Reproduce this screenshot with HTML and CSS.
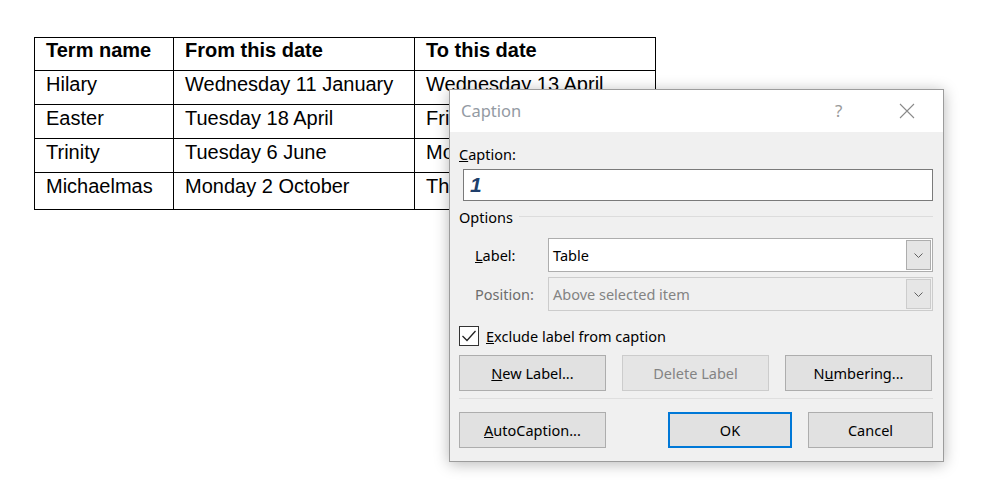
FILE: index.html
```html
<!DOCTYPE html>
<html>
<head>
<meta charset="utf-8">
<link rel="stylesheet" href="styles.css">
</head>
<body>
<table class="terms">
  <tr class="r-head"><th class="c1">Term name</th><th class="c2">From this date</th><th class="c3">To this date</th></tr>
  <tr class="r1"><td>Hilary</td><td>Wednesday 11 January</td><td>Wednesday 13 April</td></tr>
  <tr class="r2"><td>Easter</td><td>Tuesday 18 April</td><td>Friday 30 June</td></tr>
  <tr class="r3"><td>Trinity</td><td>Tuesday 6 June</td><td>Monday 4 September</td></tr>
  <tr class="r4"><td>Michaelmas</td><td>Monday 2 October</td><td>Thursday 30 November</td></tr>
</table>

<div class="dialog">
  <div class="titlebar">
    <span class="title">Caption</span>
    <span class="help">?</span>
    <svg class="close" width="16" height="16" viewBox="0 0 16 16"><path d="M1 1 L15 15 M15 1 L1 15" stroke="#8a8a8a" stroke-width="1.1" fill="none"/></svg>
  </div>
  <div class="body">
    <div class="field-label"><span class="ul">C</span>aption:</div>
    <div class="textbox">1</div>
    <div class="group-head"><span>Options</span><div class="rule"></div></div>
    <div class="row">
      <span class="lbl"><span class="ul">L</span>abel:</span>
      <div class="select"><span class="val">Table</span><span class="dd"><svg width="9" height="5" viewBox="0 0 9 5"><path d="M0.5 0.5 L4.5 4.5 L8.5 0.5" stroke="#606060" stroke-width="1" fill="none"/></svg></span></div>
    </div>
    <div class="row disabled">
      <span class="lbl">Position:</span>
      <div class="select"><span class="val">Above selected item</span><span class="dd"><svg width="9" height="5" viewBox="0 0 9 5"><path d="M0.5 0.5 L4.5 4.5 L8.5 0.5" stroke="#606060" stroke-width="1" fill="none"/></svg></span></div>
    </div>
    <div class="check">
      <span class="box"><svg width="16" height="14" viewBox="0 0 16 14"><path d="M1.5 7 L6 11.5 L14.5 2" stroke="#222" stroke-width="1.3" fill="none"/></svg></span>
      <span><span class="ul">E</span>xclude label from caption</span>
    </div>
    <div class="btnrow">
      <div class="btn"><span><span class="ul">N</span>ew Label...</span></div>
      <div class="btn off">Delete Label</div>
      <div class="btn"><span>N<span class="ul">u</span>mbering...</span></div>
    </div>
    <div class="sep"></div>
    <div class="btnrow2">
      <div class="btn"><span><span class="ul">A</span>utoCaption...</span></div>
      <div class="spacer"></div>
      <div class="btn ok">OK</div>
      <div class="btn cancel">Cancel</div>
    </div>
  </div>
</div>
</body>
</html>
```
FILE: styles.css
```css
html, body {
  margin: 0;
  padding: 0;
  background: #ffffff;
}
body {
  padding: 37px 0 0 34px;
  font-family: "Liberation Sans", Arial, sans-serif;
}
.terms {
  border-collapse: collapse;
  font-family: "Liberation Sans", Arial, sans-serif;
  font-size: 20px;
  color: #000;
}
.terms th, .terms td {
  border: 1px solid #000;
  text-align: left;
  vertical-align: top;
  padding: 2px 11px 0 11px;
  line-height: 23px;
}
.terms th { font-weight: bold; padding-top: 1px; }
.c1 { width: 116px; }
.c2 { width: 218px; }
.c3 { width: 218px; }
.r-head th { height: 31px; }
.r1 td { height: 31px; }
.r2 td { height: 31px; }
.r3 td { height: 31px; }
.r4 td { height: 34px; }

.ul { text-decoration: underline; }

.dialog {
  position: absolute;
  left: 449px;
  top: 89px;
  width: 495px;
  height: 373px;
  box-sizing: border-box;
  border: 1px solid #9c9c9c;
  background: #f0f0f0;
  box-shadow: 0 2px 14px rgba(0,0,0,0.28);
  font-family: "Noto Sans", "Segoe UI", sans-serif;
  font-size: 14.5px;
  color: #000;
}
.titlebar {
  height: 42px;
  background: #fff;
  display: flex;
  align-items: center;
  padding-left: 11px;
}
.title {
  font-size: 16.5px;
  color: #939aa3;
  flex: 1;
  margin-top: -1px;
}
.help {
  font-size: 17px;
  color: #9a9a9a;
  width: 20px;
  margin-right: 44px;
  margin-top: -2px;
}
.close {
  margin-right: 28px;
}
.body {
  padding: 0 10px 0 9px;
}
.field-label {
  margin-top: 12px;
  height: 20px;
  line-height: 20px;
}
.textbox {
  margin-top: 5px;
  margin-left: 4px;
  height: 32px;
  box-sizing: border-box;
  border: 1px solid #7a7a7a;
  background: #fff;
  font-family: "Liberation Sans", Arial, sans-serif;
  font-style: italic;
  font-weight: bold;
  font-size: 21px;
  line-height: 30px;
  color: #203f6b;
  padding-left: 6px;
}
.group-head {
  margin-top: 6px;
  height: 20px;
  line-height: 20px;
  display: flex;
  align-items: center;
  gap: 6px;
}
.rule {
  flex: 1;
  height: 1px;
  background: #dcdcdc;
  margin-top: -1px;
}
.row {
  display: flex;
  align-items: center;
  height: 34px;
  margin-top: 11px;
}
.row.disabled {
  margin-top: 5px;
  color: #6d6d6d;
}
.lbl {
  width: 73px;
  padding-left: 16px;
}
.select {
  flex: 1;
  height: 34px;
  box-sizing: border-box;
  border: 1px solid #adadad;
  background: #fff;
  display: flex;
  align-items: center;
  padding: 1px 1px 1px 4px;
}
.select .val { flex: 1; }
.dd {
  width: 25px;
  height: 30px;
  box-sizing: border-box;
  border: 1px solid #adadad;
  background: #e5e5e5;
  display: flex;
  align-items: center;
  justify-content: center;
}
.row.disabled .select {
  background: #f0f0f0;
  border-color: #cccccc;
  color: #838383;
}
.row.disabled .dd {
  border-color: #cccccc;
  background: #e6e6e6;
}
.check {
  margin-top: 15px;
  height: 20px;
  display: flex;
  align-items: center;
  gap: 7px;
}
.box {
  width: 20px;
  height: 20px;
  box-sizing: border-box;
  border: 1px solid #333;
  background: #fff;
  display: flex;
  align-items: center;
  justify-content: center;
}
.btnrow {
  margin-top: 9px;
  display: flex;
  gap: 16px;
}
.btn {
  width: 147px;
  height: 36px;
  box-sizing: border-box;
  border: 1px solid #adadad;
  background: #e1e1e1;
  display: flex;
  align-items: center;
  justify-content: center;
}
.btn.off {
  border-color: #cccccc;
  background: #e5e5e5;
  color: #838383;
}
.sep {
  margin-top: 7px;
  height: 1px;
  background: #dfdfdf;
}
.btnrow2 {
  margin-top: 13px;
  display: flex;
}
.spacer { flex: 1; }
.btn.ok {
  width: 124px;
  border: 2px solid #0078d7;
  margin-right: 16px;
}
.btn.cancel {
  width: 125px;
}
```
